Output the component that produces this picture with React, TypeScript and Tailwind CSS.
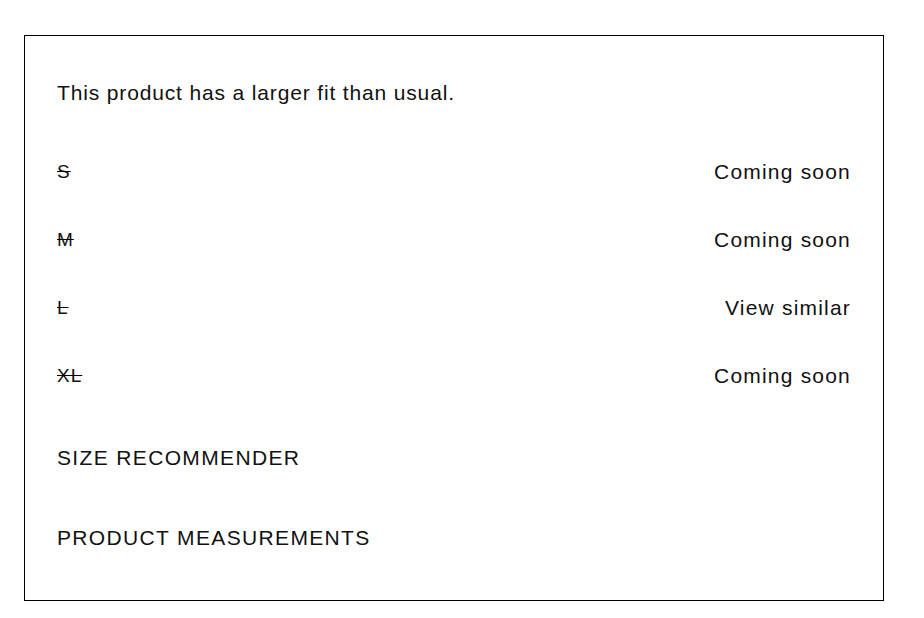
import React from 'react';

const sizes = [
  { label: 'S', status: 'Coming soon' },
  { label: 'M', status: 'Coming soon' },
  { label: 'L', status: 'View similar' },
  { label: 'XL', status: 'Coming soon' },
];

const App = () => {
  return (
    <div className="min-h-screen bg-white pt-[35px] pl-[24px] text-[#111] font-['Liberation_Sans',Arial,sans-serif]">
      <div className="w-[860px] h-[566px] border border-black px-[32px] pt-[43px]">
        <p className="h-[28px] leading-[28px] text-[21px] tracking-[0.85px]">
          This product has a larger fit than usual.
        </p>

        <ul className="mt-[31px]">
          {sizes.map((size) => (
            <li key={size.label} className="h-[68px] flex items-center justify-between">
              <span className="text-[19px] tracking-[1px] line-through decoration-black">{size.label}</span>
              <button className="text-[21px] tracking-[1.2px] cursor-pointer">{size.status}</button>
            </li>
          ))}
        </ul>

        <div className="mt-[8px]">
          {['SIZE RECOMMENDER', 'PRODUCT MEASUREMENTS'].map((item) => (
            <div key={item} className="h-[80px] flex items-center">
              <button className="text-[21px] tracking-[1.35px] cursor-pointer">{item}</button>
            </div>
          ))}
        </div>
      </div>
    </div>
  );
};

export default App;
